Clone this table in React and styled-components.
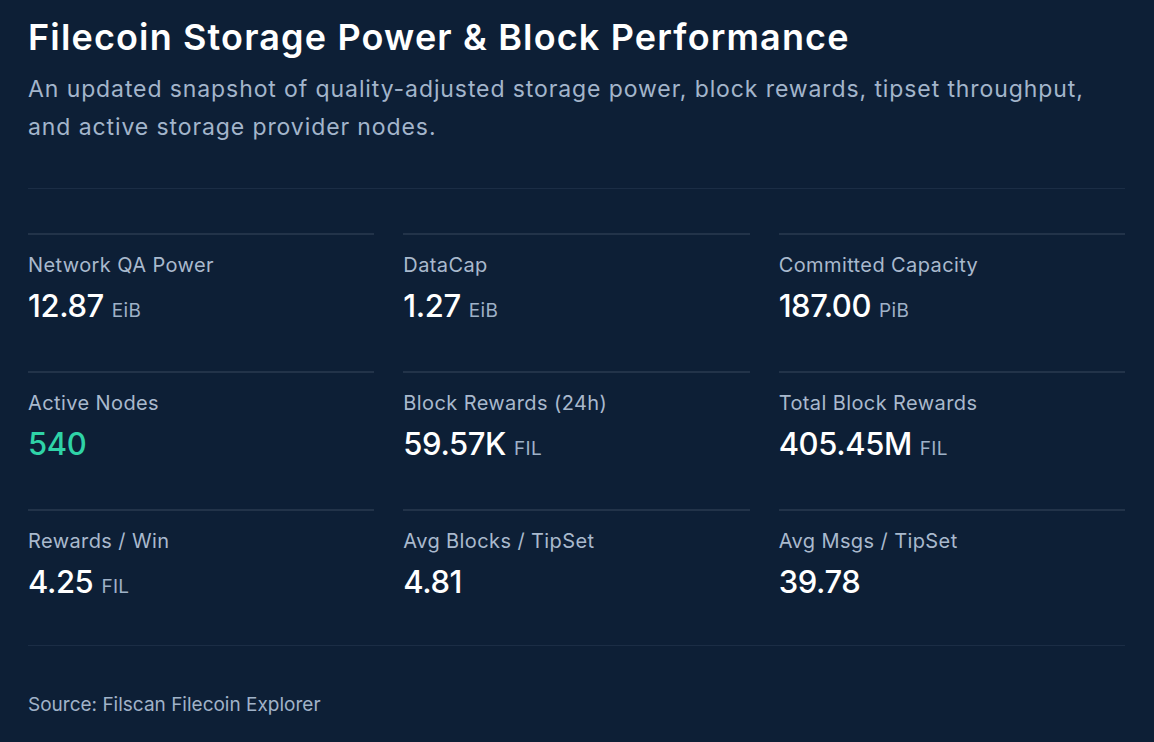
import React from "react";
import styled, { createGlobalStyle } from "styled-components";

const Global = createGlobalStyle`
  html, body { margin: 0; padding: 0; background: #0d1f36; }
  body { font-family: Inter, "Noto Sans", sans-serif; -webkit-font-smoothing: antialiased; }
`;

const Page = styled.div`
  box-sizing: border-box;
  width: 1154px;
  min-height: 742px;
  padding: 13px 29px 0 28px;
  background: #0d1f36;
  color: #ffffff;
`;

const Title = styled.h1`
  margin: 0;
  font-size: 36px;
  line-height: 48px;
  font-weight: 600;
  letter-spacing: 1.15px;
  color: #ffffff;
`;

const Subtitle = styled.p`
  margin: 9px 0 0;
  font-size: 23px;
  line-height: 38px;
  font-weight: 400;
  letter-spacing: 0.9px;
  color: #a3b5cb;
`;

const Divider = styled.hr`
  border: 0;
  height: 1px;
  background: #1b2d45;
  margin: ${(p) => p.$top}px 0 0;
`;

const Grid = styled.div`
  display: grid;
  grid-template-columns: repeat(3, 1fr);
  column-gap: 29px;
  row-gap: 2px;
  margin-top: 44px;
`;

const Card = styled.div`
  border-top: 2px solid #223349;
  min-height: 118px;
  padding-top: 16px;
`;

const Label = styled.div`
  font-size: 20px;
  line-height: 28px;
  letter-spacing: 0.4px;
  color: #a9b9cd;
`;

const Value = styled.div`
  margin-top: 7px;
  display: flex;
  align-items: baseline;
  gap: 8px;
  font-size: 31px;
  line-height: 40px;
  font-weight: 500;
  letter-spacing: -0.4px;
  color: ${(p) => (p.$accent ? "#2fd3a7" : "#ffffff")};
`;

const Unit = styled.span`
  font-size: 19px;
  font-weight: 400;
  letter-spacing: 0.3px;
  color: #9fb1c7;
`;

const Source = styled.div`
  margin-top: 45px;
  font-size: 19px;
  line-height: 28px;
  letter-spacing: 0;
  color: #a0b2c8;
`;

const stats = [
  { label: "Network QA Power", value: "12.87", unit: "EiB" },
  { label: "DataCap", value: "1.27", unit: "EiB" },
  { label: "Committed Capacity", value: "187.00", unit: "PiB" },
  { label: "Active Nodes", value: "540", accent: true },
  { label: "Block Rewards (24h)", value: "59.57K", unit: "FIL" },
  { label: "Total Block Rewards", value: "405.45M", unit: "FIL" },
  { label: "Rewards / Win", value: "4.25", unit: "FIL" },
  { label: "Avg Blocks / TipSet", value: "4.81" },
  { label: "Avg Msgs / TipSet", value: "39.78" },
];

export default function App() {
  return (
    <Page>
      <Global />
      <Title>Filecoin Storage Power &amp; Block Performance</Title>
      <Subtitle>
        An updated snapshot of quality-adjusted storage power, block rewards, tipset throughput,
        and active storage provider nodes.
      </Subtitle>
      <Divider $top={42} />
      <Grid>
        {stats.map((s) => (
          <Card key={s.label}>
            <Label>{s.label}</Label>
            <Value $accent={s.accent}>
              {s.value}
              {s.unit && <Unit>{s.unit}</Unit>}
            </Value>
          </Card>
        ))}
      </Grid>
      <Divider $top={0} />
      <Source>Source: Filscan Filecoin Explorer</Source>
    </Page>
  );
}
